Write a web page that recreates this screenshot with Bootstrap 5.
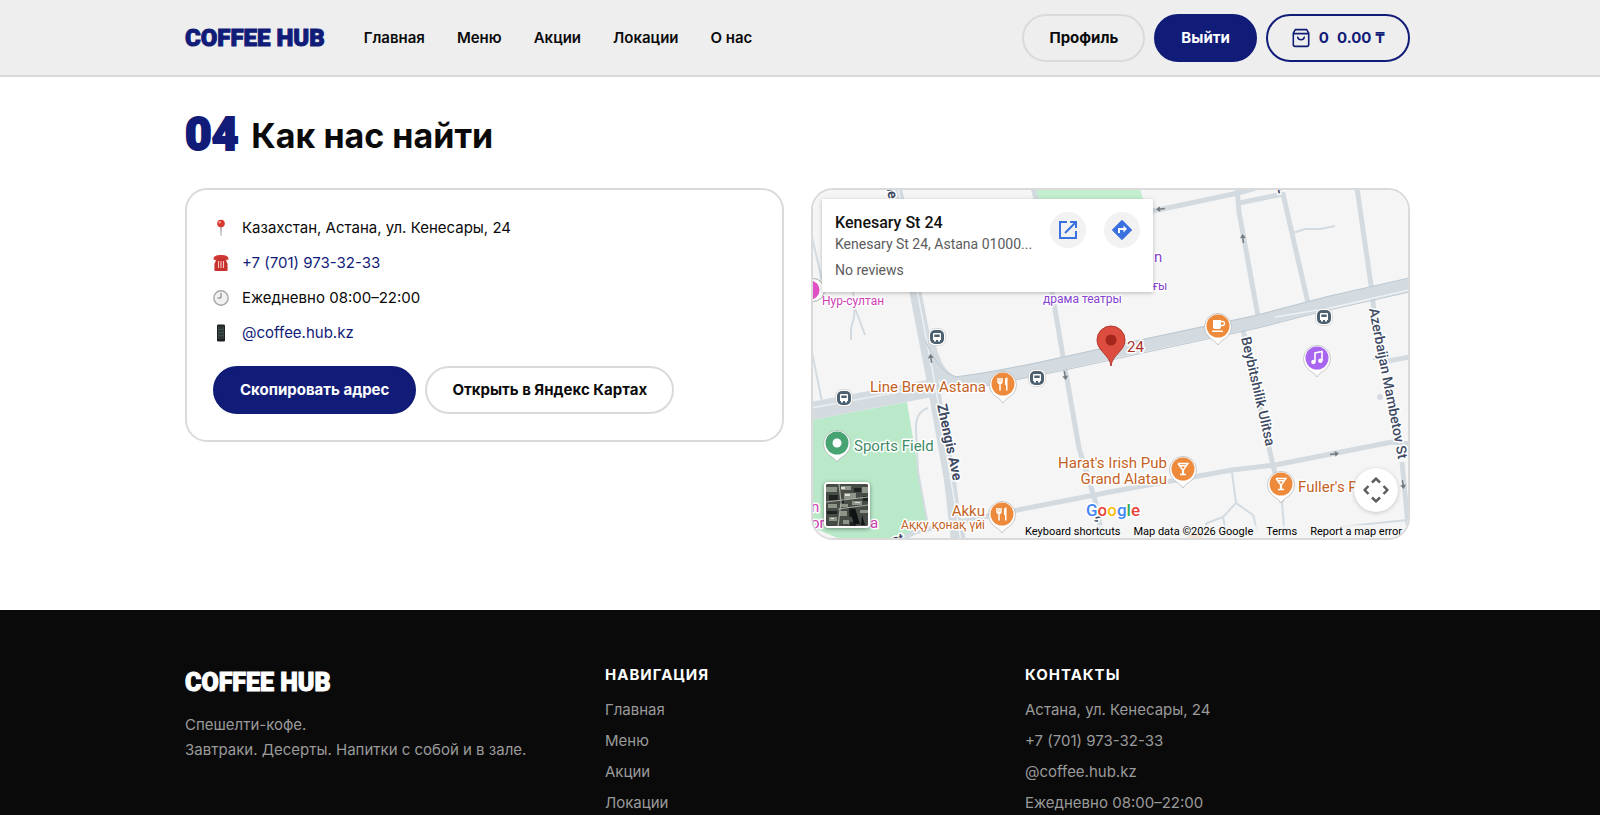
<!DOCTYPE html>
<html lang="ru">
<head>
<meta charset="utf-8">
<meta name="viewport" content="width=device-width, initial-scale=1">
<title>Coffee Hub — Локации</title>
<link href="https://cdn.jsdelivr.net/npm/bootstrap@5.3.0/dist/css/bootstrap.min.css" rel="stylesheet">
<style>
  :root { --ink: #0a0a0a; --navy: #111c78; --line: #dadada; }
  body { font-family: Inter, "Noto Sans", sans-serif; font-size: 16px; line-height: 24px; color: var(--ink); background: #fff; }
  a { text-decoration: none; }
  .wrap { max-width: 1252px; padding-left: 11px; padding-right: 16px; }
  .site-header { background: #eee; border-bottom: 2px solid #d9d9d9; padding: 14px 0 13px; }
  .brand { font-family: Roboto, sans-serif; font-weight: 900; font-size: 25px; line-height: 42px; -webkit-text-stroke: 1px currentColor; }
  .brand-top { color: var(--navy); font-size: 24px; }
  .top-links { gap: 32px; margin-left: 39px; }
  .top-links a { color: var(--ink); font-weight: 600; font-size: 15px; }
  .gap-btn { gap: 9px; }
  .pill { height: 48px; border-radius: 24px; border: 2px solid var(--line); padding: 0 25px; font-weight: 700; font-size: 15px; line-height: 24px; color: var(--ink); }
  .pill-main, .pill-main:hover { background: var(--navy); border-color: var(--navy); color: #fff; }
  .pill-cart { border-color: var(--navy); color: var(--navy); padding: 0 23px; }
  .heading-row { padding: 35px 0 30px; gap: 13px; }
  .heading-no { font-family: Roboto, sans-serif; font-weight: 900; font-size: 46px; line-height: 44px; padding-bottom: 2px; color: var(--navy); -webkit-text-stroke: 2px currentColor; }
  .heading-text { font-weight: 700; font-size: 34px; line-height: 44px; padding-top: 2px; margin: 0; }
  .cols { --bs-gutter-x: 27px; --bs-gutter-y: 27px; }
  .foot-cols { --bs-gutter-x: 35px; }
  .panel { border: 2px solid var(--line); border-radius: 22px; }
  .info-panel { padding: 26px; }
  .info-list { gap: 11px; margin-bottom: 21px; }
  .info-list li { gap: 13px; font-size: 15px; }
  .info-list a { color: var(--navy); }
  .map-panel { height: 352px; }
  .map-panel > svg { width: 100%; height: 100%; }
  main { padding-bottom: 70px; }
  .site-footer { background: #0a0a0a; padding-top: 52px; color: #9a9a9a; font-size: 15px; }
  .site-footer h2 { font-size: 15px; line-height: 26px; letter-spacing: 1px; font-weight: 700; color: #fff; margin: 0 0 10px; }
  .site-footer a { color: #9a9a9a; }
  .foot-list { gap: 7px; }
  .foot-text { line-height: 25px; margin-top: 8px; }

  .map-panel, .map-panel text { font-family: Roboto, sans-serif; }
  .place { left: 9px; top: 9px; width: 331px; height: 93px; background: #fff; box-shadow: 0 1px 4px rgba(0,0,0,.25); padding: 13px; color: #5c5c5c; font-size: 14px; line-height: 20px; }
  .place strong { display: block; font-size: 16px; line-height: 22px; font-weight: 500; color: #111; }
  .place p { margin: 0 0 6px; }
  .place-actions { right: 13px; top: 13px; gap: 18px; }
  .round { width: 36px; height: 36px; border-radius: 50%; background: #f2f2f2; }
  .sat { left: 11px; bottom: 10px; width: 46px; height: 46px; border: 2px solid #fff; border-radius: 4px; padding: 0; box-shadow: 0 1px 4px rgba(0,0,0,.4); background: #333; }
  .pan { right: 10px; bottom: 26px; width: 44px; height: 44px; border: 0; border-radius: 50%; background: #fff; box-shadow: 0 1px 4px rgba(0,0,0,.2); padding: 0; }
  .legal { right: 0; bottom: 0; gap: 13px; padding: 0 6px 0 4px; background: rgba(245,245,245,.7); font-size: 11px; line-height: 13px; color: #000; }
  .legal a, .legal button { color: #000; }
  .legal button { border: 0; background: none; padding: 0; }
  .road { fill: none; stroke: #d3dbe1; stroke-linejoin: round; }
  .thin { stroke-width: 2; }
  .mid { stroke-width: 5; }
  .lbl { font-size: 15px; paint-order: stroke; stroke: #fff; stroke-width: 3px; stroke-linejoin: round; }
  .lbl-s { font-size: 12px; }
  .food { fill: #c4621f; }
  .street { fill: #3e4a63; font-size: 14px; font-weight: 500; }
  .street-main { font-weight: 700; }
  .purp { fill: #8743cf; }
  .pink { fill: #cf42b4; }
  .map-brand { font-size: 17px; font-weight: 500; }
</style>
</head>
<body>
<header class="site-header">
  <div class="wrap container-fluid d-flex align-items-center flex-wrap">
    <a class="brand brand-top" href="#">COFFEE HUB</a>
    <nav class="top-links d-flex flex-wrap">
      <a href="#">Главная</a><a href="#">Меню</a><a href="#">Акции</a><a href="#">Локации</a><a href="#">О нас</a>
    </nav>
    <div class="d-flex gap-btn ms-auto">
      <button class="btn pill" type="button">Профиль</button>
      <button class="btn pill pill-main" type="button">Выйти</button>
      <button class="btn pill pill-cart d-flex align-items-center gap-2" type="button">
        <svg width="20" height="20" viewBox="0 0 20 20" fill="none" stroke="currentColor" stroke-width="1.6" stroke-linejoin="round" stroke-linecap="round"><path d="M4.3 1.6h11.4l2 3.6v11.4a1.8 1.8 0 0 1-1.8 1.8H4.1a1.8 1.8 0 0 1-1.8-1.8V5.200z M2.300 5.600h15.400 M6.700 9.200c.7 3.400 5.900 3.400 6.600 0"/></svg>
        <span>0</span><span>0.00 ₸</span>
      </button>
    </div>
  </div>
</header>

<main>
  <div class="wrap container-fluid">
    <div class="heading-row d-flex align-items-center">
      <span class="heading-no">04</span>
      <h1 class="heading-text">Как нас найти</h1>
    </div>
    <div class="row cols align-items-start">
      <div class="col-lg-6">
        <section class="panel info-panel">
          <ul class="info-list list-unstyled d-flex flex-column">
            <li class="d-flex align-items-center">
              <svg width="16" height="18" viewBox="0 0 16 18"><path d="M7.300 7h1.400l-.4 10h-.6z" fill="#8d8d8d"/><circle cx="8" cy="4.500" r="3.800" fill="#d8392f"/><circle cx="6.800" cy="3.200" r="1.200" fill="#f39a93"/></svg>
              <span>Казахстан, Астана, ул. Кенесары, 24</span></li>
            <li class="d-flex align-items-center">
              <svg width="16" height="18" viewBox="0 0 16 18"><path d="M.5 5.500C.5 2 3 1 8 1s7.500 1 7.500 4.500l-2.500.8-1.500-1.800h-7L3 6.300z" fill="#d03a35"/><path d="M4 4h8l2.600 6v6a1 1 0 0 1-1 1H2.400a1 1 0 0 1-1-1v-6z" fill="#c8322e"/><path d="M5.500 7v7M8 7v7M10.500 7v7" stroke="#f5c8c4" stroke-width="1.100"/></svg>
              <a href="#">+7 (701) 973-32-33</a></li>
            <li class="d-flex align-items-center">
              <svg width="16" height="18" viewBox="0 0 16 18"><circle cx="8" cy="9" r="7.200" fill="#f1f1f1" stroke="#a6a6a6" stroke-width="1.400"/><path d="M8 3.800V9H4.500" fill="none" stroke="#777" stroke-width="1"/></svg>
              <span>Ежедневно 08:00–22:00</span></li>
            <li class="d-flex align-items-center">
              <svg width="16" height="18" viewBox="0 0 16 18"><rect x="4" y=".5" width="8" height="17" rx="1.300" fill="#1d1f20"/><rect x="5" y="2.500" width="6" height="12" fill="#3f4f4c"/><path d="M5.500 4h5M5.500 7h5M5.500 10h5M5.500 13h5" stroke="#1d1f20" stroke-width="1"/></svg>
              <a href="#">@coffee.hub.kz</a></li>
          </ul>
          <div class="d-flex flex-wrap gap-btn">
            <button class="btn pill pill-main" type="button">Скопировать адрес</button>
            <button class="btn pill" type="button">Открыть в Яндекс Картах</button>
          </div>
        </section>
      </div>

      <div class="col-lg-6">
        <section class="panel map-panel position-relative overflow-hidden">
          <svg class="d-block" viewBox="813 190 595 348" preserveAspectRatio="xMidYMid slice" role="img" aria-label="Карта">
            <defs>
              <g id="drop"><path d="M0 19c-2-4-6-5-9.500-8.500a13.500 13.500 0 1 1 19 0C6 14 2 15 0 19z" fill="#fff" stroke="#999" stroke-opacity=".5" stroke-width="1"/></g>
              <g id="fork"><use href="#drop"/><circle r="11.500" fill="#ee8a3c"/><path d="M-5-6v3.500a2 2 0 0 0 4 0V-6M-3-6V6.500" fill="none" stroke="#fff" stroke-width="1.500"/><path d="M2 1V-4c0-2 1-2.500 2.500-2.500v13H3V1z" fill="#fff"/></g>
              <g id="glass"><use href="#drop"/><circle r="11.500" fill="#ee8a3c"/><path d="M-5-5.500H5L.4.8V5.500M-3 5.500h6M-.4 5.500V.8L-5-5.500M-3.500-3.200h7" fill="none" stroke="#fff" stroke-width="1.400"/></g>
              <g id="bus"><rect x="-8.500" y="-8.500" width="17" height="17" rx="6" fill="#fff" stroke="#bbb" stroke-width=".5"/><rect x="-7" y="-7" width="14" height="14" rx="5" fill="#4c6070"/><path d="M-4-3a1 1 0 0 1 1-1h6a1 1 0 0 1 1 1v6h-8z M-3 3h2v1.500h-2z M1 3h2v1.500H1z" fill="#fff"/><path d="M-2.700-2.500h5.400v2.500h-5.400z" fill="#4c6070"/></g>
              <g id="arrow"><path d="M-4 0H2" stroke="#747a80" stroke-width="1.500"/><path d="M1-3L5 0 1 3z" fill="#747a80"/></g>
            </defs>
            <rect x="811" y="188" width="600" height="354" fill="#f5f5f5"/>
            <path d="M811 420L907 402L927 523L900 541H845L811 527z" fill="#b9e9c8"/>
            <path d="M1033 188H1140L1143 199H1036z" fill="#c4eed0"/>
            <g class="road thin">
              <path d="M812 237L822 280M812 352L822 402M853 292Q857 312 851 328V340M855 308L865 335M928 408Q915 412 916 430L918 472L927 520"/>
              <path d="M1232 472L1236 503L1223 517L1207 523L1203 530M1236 503L1253 515L1257 530M1223 517L1226 532M1282 502L1285 540M1293 233L1305 229L1320 229L1335 226M1340 527L1407 520M1373 359H1409"/>
            </g>
            <g class="road mid">
              <path d="M1052 292L1065 368L1079 448L1095 500L1103 541M1153 211L1238 193L1256 188M1237 188L1239 212L1258 316M1239 203L1283 194L1308 303M1357 188L1371 285L1375 320M1243 330L1270 452L1273 465L1282 502M1388 361L1409 357M1402 462L1408 525M1033 188L1037 202"/>
              <path d="M900 540L915 532L992 515L1115 491L1232 470L1275 465L1392 442L1409 444"/>
            </g>
            <path class="road" stroke-width="18" d="M811 411L932 388"/>
            <path d="M811 408L932 386" stroke="#e9eef1" stroke-width="1.500"/>
            <path class="road" stroke-width="13" d="M928 340Q937 383 960 383Q995 378 1050 366L1145 345L1258 321L1330 302L1409 285"/>
            <path class="road" stroke-width="12" d="M896 188L915 290L931 372L950 480L957 541"/>
            <path d="M932 385L962 541" class="road" stroke-width="8"/>
            <path d="M898 188L917 290L935 384L961 541M1275 317L1330 308L1409 290" fill="none" stroke="#eef1f3" stroke-width="1.500"/>
            <path d="M925 340Q937 370 955 377Q995 372 1050 360L1145 339L1258 315L1330 296L1409 278M937 385Q948 392 965 390L1060 371L1258 328L1320 312L1409 292" fill="none" stroke="#bcc8d1" stroke-width="1"/>
            <use href="#arrow" transform="translate(1161 209) rotate(173)"/>
            <use href="#arrow" transform="translate(1243 239) rotate(-96)"/>
            <use href="#arrow" transform="translate(931 359) rotate(-100)"/>
            <use href="#arrow" transform="translate(1065 375) rotate(80)"/>
            <use href="#arrow" transform="translate(1334 454) rotate(-8)"/>
            <use href="#arrow" transform="translate(1403 484) rotate(82)"/>
            <circle cx="1380" cy="397" r="3" fill="#d5dbe1"/>
            <path d="M1187 541a8 8 0 0 1 16 0z" fill="#f3b68d"/>

            <text class="lbl street street-main" transform="translate(886 184) rotate(80)">ne</text>
            <text class="lbl street" transform="translate(1277 191) rotate(-12)">p.</text>
            <text class="lbl street" transform="translate(893 545) rotate(-12)">st</text>
            <text class="lbl street street-main" transform="translate(937 405) rotate(78)">Zhengis Ave</text>
            <text class="lbl street" transform="translate(1241 338) rotate(77)">Beybitshilik Ulitsa</text>
            <text class="lbl street" transform="translate(1369 309) rotate(79)">Azerbaijan Mambetov St</text>
            <text class="lbl street" transform="translate(1094 512) rotate(76)">n,</text>

            <text class="lbl lbl-s pink" x="822" y="305">Нур-султан</text>
            <text class="lbl lbl-s purp" x="1043" y="303">драма театры</text>
            <text class="lbl purp" x="1154" y="262">n</text>
            <text class="lbl lbl-s purp" x="1153" y="290">ғы</text>
            <text class="lbl pink" x="811" y="512">n</text>
            <text class="lbl pink" x="811" y="528">or</text>
            <text class="lbl pink" x="870" y="528">a</text>
            <text class="lbl food" x="986" y="392" text-anchor="end">Line Brew Astana</text>
            <text class="lbl food" x="985" y="516" text-anchor="end">Akku</text>
            <text class="lbl lbl-s food" x="985" y="529" text-anchor="end">Аққу қонақ үйі</text>
            <text class="lbl food" x="1167" y="468" text-anchor="end">Harat's Irish Pub</text>
            <text class="lbl food" x="1167" y="484" text-anchor="end">Grand Alatau</text>
            <text class="lbl food" x="1298" y="492">Fuller's Pub</text>
            <text class="lbl" x="854" y="451" fill="#3f8a66">Sports Field</text>
            <text class="lbl" x="1127" y="352" fill="#a8322a">24</text>

            <g transform="translate(813 290)"><circle r="11.500" fill="#fff" stroke="#aaa"/><circle r="9.500" cx="-3" fill="#e04fc4"/></g>
            <use href="#bus" x="937" y="337"/><use href="#bus" x="844" y="398"/><use href="#bus" x="1037" y="378"/><use href="#bus" x="1324" y="317"/>
            <use href="#fork" x="1003" y="384"/><use href="#fork" x="1002" y="514"/>
            <use href="#glass" x="1183" y="469"/><use href="#glass" x="1281" y="484"/>
            <g transform="translate(1218 326)"><use href="#drop"/><circle r="11.500" fill="#ee8a3c"/><path d="M-5-6H3V1a2 2 0 0 1-2 2h-4a2 2 0 0 1-2-2z M-6 4.500H5V6H-6z" fill="#fff"/><path d="M3-4.500h1.500a1.800 1.800 0 0 1 0 4H3" fill="none" stroke="#fff" stroke-width="1.300"/></g>
            <g transform="translate(1317 358)"><use href="#drop"/><circle r="11.500" fill="#a866f0"/><path d="M-2 4v-9l7-1.500V2.500" fill="none" stroke="#fff" stroke-width="1.600"/><circle cx="-3.600" cy="4" r="2.200" fill="#fff"/><circle cx="3.400" cy="2.800" r="2.200" fill="#fff"/></g>
            <g transform="translate(837 443)"><use href="#drop"/><circle r="11.500" fill="#48a373"/><circle r="4.500" fill="#fff"/></g>
            <g transform="translate(1111 340)"><path d="M0 26C-1 15-14 11-14 0a14 14 0 0 1 28 0C14 11 1 15 0 26z" fill="#dc4c3f" stroke="#b3362c" stroke-width="1"/><circle r="5.500" fill="#a3261d"/></g>
            <text class="lbl map-brand" x="1086" y="516"><tspan fill="#4285f4">G</tspan><tspan fill="#ea4335">o</tspan><tspan fill="#fbbc05">o</tspan><tspan fill="#4285f4">g</tspan><tspan fill="#34a853">l</tspan><tspan fill="#ea4335">e</tspan></text>
          </svg>

          <div class="place position-absolute">
            <strong>Kenesary St 24</strong>
            <p>Kenesary St 24, Astana 01000...</p>
            <span>No reviews</span>
            <div class="place-actions position-absolute d-flex">
              <a class="round d-flex align-items-center justify-content-center" href="#" aria-label="Open"><svg width="18" height="18" viewBox="0 0 18 18" fill="none" stroke="#3a70e0" stroke-width="2"><path d="M8 1H1v16h16v-7M11 1h6v6M17 1L6 12"/></svg></a>
              <a class="round d-flex align-items-center justify-content-center" href="#" aria-label="Directions"><svg width="20" height="20" viewBox="0 0 20 20"><path d="M10 .3L19.700 10 10 19.700.3 10z" fill="#3a70e0" stroke="#3a70e0" stroke-linejoin="round"/><path d="M7 13V9h5" fill="none" stroke="#fff" stroke-width="2"/><path d="M11.500 5.500L15 9l-3.500 3.500z" fill="#fff"/></svg></a>
            </div>
          </div>
          <button class="sat position-absolute overflow-hidden" type="button" aria-label="Satellite">
            <svg class="d-block" width="42" height="42" viewBox="0 0 42 42"><rect width="42" height="42" fill="#474b45"/><path d="M0 3h11v5H0zM15 2h10v4H15zM18 9h12v6H18zM2 20h9v4H2zM14 20h8v3h-8zM26 17h10v4H26zM3 33h8v4H3zM14 27h7v5h-7zM36 3h6v6h-6zM17 36h6v4h-6zM34 26h8v3h-8z" fill="#8d9488"/><path d="M3 11h9v5H3zM28 4h7v4h-7zM1 27h10v3H1zM23 24h4v9h-4zM14 16h4v3h-4zM37 12h5v5h-5zM24 38h6v4h-6z" fill="#1d211f"/><path d="M29 24l5 16h-6l-4-13zM36 31l3 10h-4z" fill="#0e1313"/><path d="M13 0l2 18-3 24M0 18l42-5M12 25l30-4" fill="none" stroke="#a9ada4" stroke-width="1.200"/><path d="M19 10h5v2h-5zM15 3h4v2h-4zM5 34h3v1H5zM29 18h5v1h-5z" fill="#dedfd6"/></svg>
          </button>
          <button class="pan position-absolute" type="button" aria-label="Map camera controls">
            <svg width="26" height="26" viewBox="0 0 26 26" fill="none" stroke="#5b5b5b" stroke-width="2.500"><path d="M9 5.500L13 1.700l4 3.800M9 20.500l4 3.800 4-3.800M5.500 9L1.700 13l3.800 4M20.500 9l3.800 4-3.800 4"/></svg>
          </button>
          <div class="legal position-absolute d-flex">
            <button type="button">Keyboard shortcuts</button><span>Map data ©2026 Google</span><a href="#">Terms</a><a href="#">Report a map error</a>
          </div>
        </section>
      </div>
    </div>
  </div>
</main>

<footer class="site-footer">
  <div class="wrap container-fluid">
    <div class="row foot-cols">
      <div class="col-md-4">
        <a class="brand text-white d-block" href="#">COFFEE HUB</a>
        <p class="foot-text mb-0">Спешелти-кофе.<br>Завтраки. Десерты. Напитки с собой и в зале.</p>
      </div>
      <div class="col-md-4">
        <h2>НАВИГАЦИЯ</h2>
        <ul class="foot-list list-unstyled d-flex flex-column mb-0">
          <li><a href="#">Главная</a></li><li><a href="#">Меню</a></li><li><a href="#">Акции</a></li><li><a href="#">Локации</a></li>
        </ul>
      </div>
      <div class="col-md-4">
        <h2>КОНТАКТЫ</h2>
        <ul class="foot-list list-unstyled d-flex flex-column mb-0">
          <li>Астана, ул. Кенесары, 24</li><li><a href="#">+7 (701) 973-32-33</a></li><li><a href="#">@coffee.hub.kz</a></li><li>Ежедневно 08:00–22:00</li>
        </ul>
      </div>
    </div>
  </div>
</footer>
<script src="https://cdn.jsdelivr.net/npm/bootstrap@5.3.0/dist/js/bootstrap.bundle.min.js"></script>
</body>
</html>
